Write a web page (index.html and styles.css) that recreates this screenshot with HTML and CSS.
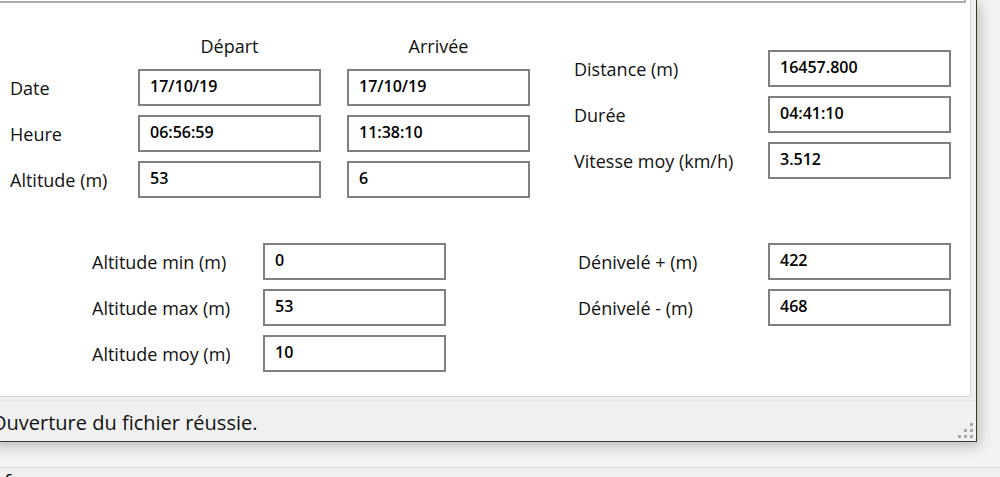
FILE: index.html
```html
<!DOCTYPE html>
<html lang="fr">
<head>
  <meta charset="UTF-8" />
  <meta name="viewport" content="width=device-width, initial-scale=1.0" />
  <title>Statistiques de la trace</title>
  <link rel="stylesheet" href="styles.css">
</head>
<body>
  <div class="window">
    <div class="panel">
      <div class="frame-edge"></div>

      <!-- Départ / Arrivée + totaux -->
      <div class="top">
        <div class="times">
          <span></span>
          <span class="head">Départ</span>
          <span class="head">Arrivée</span>

          <span class="lbl">Date</span>
          <div class="field">17/10/19</div>
          <div class="field">17/10/19</div>

          <span class="lbl">Heure</span>
          <div class="field">06:56:59</div>
          <div class="field">11:38:10</div>

          <span class="lbl">Altitude (m)</span>
          <div class="field">53</div>
          <div class="field">6</div>
        </div>

        <div class="totals">
          <span class="lbl">Distance (m)</span>
          <div class="field">16457.800</div>
          <span class="lbl">Durée</span>
          <div class="field">04:41:10</div>
          <span class="lbl">Vitesse moy (km/h)</span>
          <div class="field">3.512</div>
        </div>
      </div>

      <!-- Altitudes / dénivelés -->
      <div class="bottom">
        <div class="alt">
          <span class="lbl">Altitude min (m)</span>
          <div class="field">0</div>
          <span class="lbl">Altitude max (m)</span>
          <div class="field">53</div>
          <span class="lbl">Altitude moy (m)</span>
          <div class="field">10</div>
        </div>

        <div class="elev">
          <span class="lbl">Dénivelé + (m)</span>
          <div class="field">422</div>
          <span class="lbl">Dénivelé - (m)</span>
          <div class="field">468</div>
        </div>
      </div>
    </div>

    <div class="status">
      Ouverture du fichier réussie.
      <svg class="grip" width="15" height="15" viewBox="0 0 15 15">
        <rect x="12" y="0" width="3" height="3" />
        <rect x="6" y="6" width="3" height="3" />
        <rect x="12" y="6" width="3" height="3" />
        <rect x="0" y="12" width="3" height="3" />
        <rect x="6" y="12" width="3" height="3" />
        <rect x="12" y="12" width="3" height="3" />
      </svg>
    </div>
  </div>

  <div class="behind"><span>f</span></div>
</body>
</html>
```

FILE: styles.css
```css
body {
  margin: 0;
  height: 477px;
  overflow: hidden;
  background-color: #f3f3f3;
  color: #111;
  font-family: "Open Sans", sans-serif;
}

.window {
  margin-left: -12px;
  width: 989px;
  height: 442px;
  box-sizing: border-box;
  display: flex;
  flex-direction: column;
  background-color: #f0f0f0;
  border-right: 1px solid #3d3526;
  border-bottom: 1px solid #3d3526;
  box-shadow: 3px 4px 12px rgba(0, 0, 0, 0.24);
}

.panel {
  height: 396px;
  margin-right: 5px;
  background-color: #fff;
  border-right: 1px solid #dadada;
  border-bottom: 1px solid #d6d6d6;
}

.frame-edge {
  height: 1px;
  margin-right: 4px;
  border-right: 2px solid #a9acb0;
  border-bottom: 2px solid #a9acb0;
}

.top {
  display: flex;
  padding-left: 22px;
}

.times {
  width: 564px;
  padding-top: 29px;
  display: grid;
  grid-template-columns: 102px 183px 183px;
  grid-template-rows: 28px repeat(3, 37px);
  column-gap: 26px;
  row-gap: 9px;
  align-items: center;
}

.totals {
  padding-top: 47px;
  display: grid;
  grid-template-columns: 194px 183px;
  grid-auto-rows: 37px;
  row-gap: 9px;
  align-items: center;
}

.bottom {
  display: flex;
  margin-top: 45px;
  padding-left: 104px;
}

.alt {
  width: 486px;
  display: grid;
  grid-template-columns: 171px 183px;
  grid-auto-rows: 37px;
  row-gap: 9px;
  align-items: center;
}

.elev {
  display: grid;
  grid-template-columns: 190px 183px;
  grid-auto-rows: 37px;
  row-gap: 9px;
  align-items: center;
}

.lbl, .head {
  font-size: 18px;
  font-weight: 500;
  white-space: nowrap;
}

.head {
  justify-self: center;
}

.field {
  height: 37px;
  box-sizing: border-box;
  display: flex;
  align-items: center;
  padding: 0 10px 3px;
  border: 2px solid #808080;
  font-size: 16px;
  font-weight: 600;
  color: #000;
}

.status {
  position: relative;
  height: 41px;
  box-sizing: border-box;
  margin-top: 3px;
  padding: 3px 0 0 3px;
  border-top: 1px solid #e3e3e3;
  font-size: 20px;
  font-weight: 500;
  line-height: 37px;
  white-space: nowrap;
}

.grip {
  position: absolute;
  right: 3px;
  bottom: 3px;
  fill: #a8a8a8;
}

.behind {
  margin-top: 25px;
  height: 20px;
  padding-left: 4px;
  border-top: 1px solid #d9d9d9;
  background-color: #f0f0f0;
  font-size: 20px;
  line-height: 1.36;
}
```
